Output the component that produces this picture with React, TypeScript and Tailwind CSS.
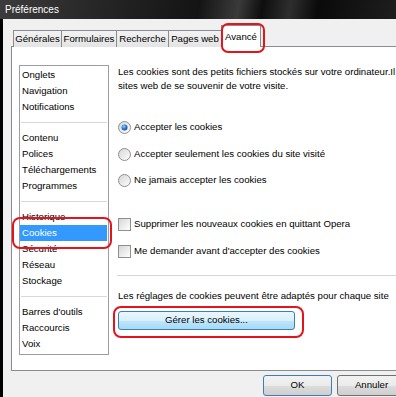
import React from "react";

function Radio({ checked }: { checked?: boolean }) {
  return (
    <svg width="13" height="13" viewBox="0 0 13 13" className="shrink-0">
      <defs>
        <linearGradient id="rg" x1="0" y1="0" x2="1" y2="1">
          <stop offset="0" stopColor="#d4d4d4" />
          <stop offset="1" stopColor="#ffffff" />
        </linearGradient>
        <radialGradient id="dot" cx="0.4" cy="0.35" r="0.7">
          <stop offset="0" stopColor="#9ad2ff" />
          <stop offset="0.5" stopColor="#2d7fd6" />
          <stop offset="1" stopColor="#0d4a9c" />
        </radialGradient>
      </defs>
      <circle cx="6.5" cy="6.5" r="6" fill="url(#rg)" stroke="#8d8f91" strokeWidth="1" />
      {checked && <circle cx="6.5" cy="6.5" r="3" fill="url(#dot)" />}
    </svg>
  );
}

function Check() {
  return (
    <div className="w-[13px] h-[13px] shrink-0 border border-[#8e8f8f] bg-[linear-gradient(135deg,#d6d6d6,#ffffff)]" />
  );
}

function Item({ label, selected }: { label: string; selected?: boolean }) {
  return (
    <div
      className={
        "h-[16px] leading-[16px] pl-[2px] whitespace-nowrap " +
        (selected ? "bg-[#3399ff] text-white mr-px" : "")
      }
    >
      {label}
    </div>
  );
}

function Sep() {
  return <div className="h-px bg-[#d8d8d8] my-[7px] mx-px" />;
}

export default function App() {
  return (
    <div className="relative w-[396px] h-[397px] overflow-hidden bg-black flex flex-col text-[9.65px] text-black font-['Liberation_Sans',Arial,sans-serif]">
      {/* title bar */}
      <div className="h-[19px] shrink-0 flex items-center pl-[5px] text-white text-[10px] bg-[linear-gradient(100deg,#3c3c3c_0%,#262626_25%,#141414_50%,#3a3a3a_60%,#0e0e0e_66%,#2e2e2e_73%,#0a0a0a_80%,#1e1e1e_100%)]">
        Préférences
      </div>
      {/* window body */}
      <div className="flex-1 ml-[3px] bg-[#f0f0f0] flex flex-col">
        {/* tabs */}
        <div className="mt-[7px] pl-[10px] flex items-end h-[21px] relative z-10 -mb-px">
          <div className="w-[49px] h-[17px] border border-b-0 border-[#898c95] bg-[linear-gradient(#f2f2f2,#e4e4e4)] flex items-center justify-center">
            Générales
          </div>
          <div className="w-[55px] h-[17px] border border-b-0 border-l-0 border-[#898c95] bg-[linear-gradient(#f2f2f2,#e4e4e4)] flex items-center justify-center">
            Formulaires
          </div>
          <div className="w-[52px] h-[17px] border border-b-0 border-l-0 border-[#898c95] bg-[linear-gradient(#f2f2f2,#e4e4e4)] flex items-center justify-center">
            Recherche
          </div>
          <div className="w-[53px] h-[17px] border border-b-0 border-l-0 border-[#898c95] bg-[linear-gradient(#f2f2f2,#e4e4e4)] flex items-center justify-center whitespace-nowrap">
            Pages web
          </div>
          <div className="w-[40px] h-[22px] border border-b-0 border-[#898c95] bg-white flex items-start justify-center pt-[4px] -ml-px">
            Avancé
          </div>
        </div>
        {/* panel */}
        <div className="ml-[8px] w-[400px] h-[325px] shrink-0 border border-[#898c95] bg-white flex pt-[18px] pl-[7px] gap-[9px] overflow-hidden">
          <div className="w-[90px] h-[290px] shrink-0 border border-[#9a9da3] bg-white pt-px">
            <Item label="Onglets" />
            <Item label="Navigation" />
            <Item label="Notifications" />
            <Sep />
            <Item label="Contenu" />
            <Item label="Polices" />
            <Item label="Téléchargements" />
            <Item label="Programmes" />
            <Sep />
            <Item label="Historique" />
            <Item label="Cookies" selected />
            <Item label="Sécurité" />
            <Item label="Réseau" />
            <Item label="Stockage" />
            <Sep />
            <Item label="Barres d'outils" />
            <Item label="Raccourcis" />
            <Item label="Voix" />
          </div>
          <div className="flex-1 flex flex-col">
            <div className="leading-[14px] whitespace-nowrap">
              <div>Les cookies sont des petits fichiers stockés sur votre ordinateur.Il</div>
              <div>sites web de se souvenir de votre visite.</div>
            </div>
            <div className="mt-[26px] h-[16px] flex items-center gap-[2px]">
              <Radio checked />
              <span className="ml-[1px]">Accepter les cookies</span>
            </div>
            <div className="mt-[11px] h-[16px] flex items-center gap-[2px]">
              <Radio />
              <span className="ml-[1px]">Accepter seulement les cookies du site visité</span>
            </div>
            <div className="mt-[10px] h-[16px] flex items-center gap-[2px]">
              <Radio />
              <span className="ml-[1px]">Ne jamais accepter les cookies</span>
            </div>
            <div className="mt-[28px] h-[16px] flex items-center gap-[3px]">
              <Check />
              <span>Supprimer les nouveaux cookies en quittant Opera</span>
            </div>
            <div className="mt-[11px] h-[16px] flex items-center gap-[3px]">
              <Check />
              <span>Me demander avant d'accepter des cookies</span>
            </div>
            <div className="mt-[16px] h-px bg-[#d5d5d5] -ml-px" />
            <div className="mt-[13px] leading-[14px] whitespace-nowrap">
              Les réglages de cookies peuvent être adaptés pour chaque site
            </div>
            <div className="mt-[8px] w-[177px] h-[19px] rounded-[3px] border border-[#3c7fb1] bg-[linear-gradient(#eaf6fd_0%,#d9f0fc_50%,#bee6fd_51%,#a7d9f5_100%)] flex items-center justify-center">
              Gérer les cookies...
            </div>
          </div>
        </div>
        {/* bottom buttons */}
        <div className="mt-[4px] pl-[260px] flex gap-[5px]">
          <div className="w-[69px] h-[21px] shrink-0 rounded-[3px] border border-[#3c7fb1] bg-[linear-gradient(#f2f2f2_0%,#ebebeb_50%,#dddddd_51%,#cfcfcf_100%)] flex items-center justify-center">
            OK
          </div>
          <div className="w-[69px] h-[21px] shrink-0 rounded-[3px] border border-[#707070] bg-[linear-gradient(#f2f2f2_0%,#ebebeb_50%,#dddddd_51%,#cfcfcf_100%)] flex items-center justify-center">
            Annuler
          </div>
        </div>
      </div>
      {/* red highlight outlines */}
      <div className="absolute left-[221px] top-[23px] w-[44px] h-[30px] border-2 border-[#e3141c] rounded-[7px] z-20" />
      <div className="absolute left-[12px] top-[217px] w-[100px] h-[32px] border-2 border-[#e3141c] rounded-[8px] z-20" />
      <div className="absolute left-[113px] top-[306px] w-[191px] h-[32px] border-2 border-[#e3141c] rounded-[8px] z-20" />
    </div>
  );
}
